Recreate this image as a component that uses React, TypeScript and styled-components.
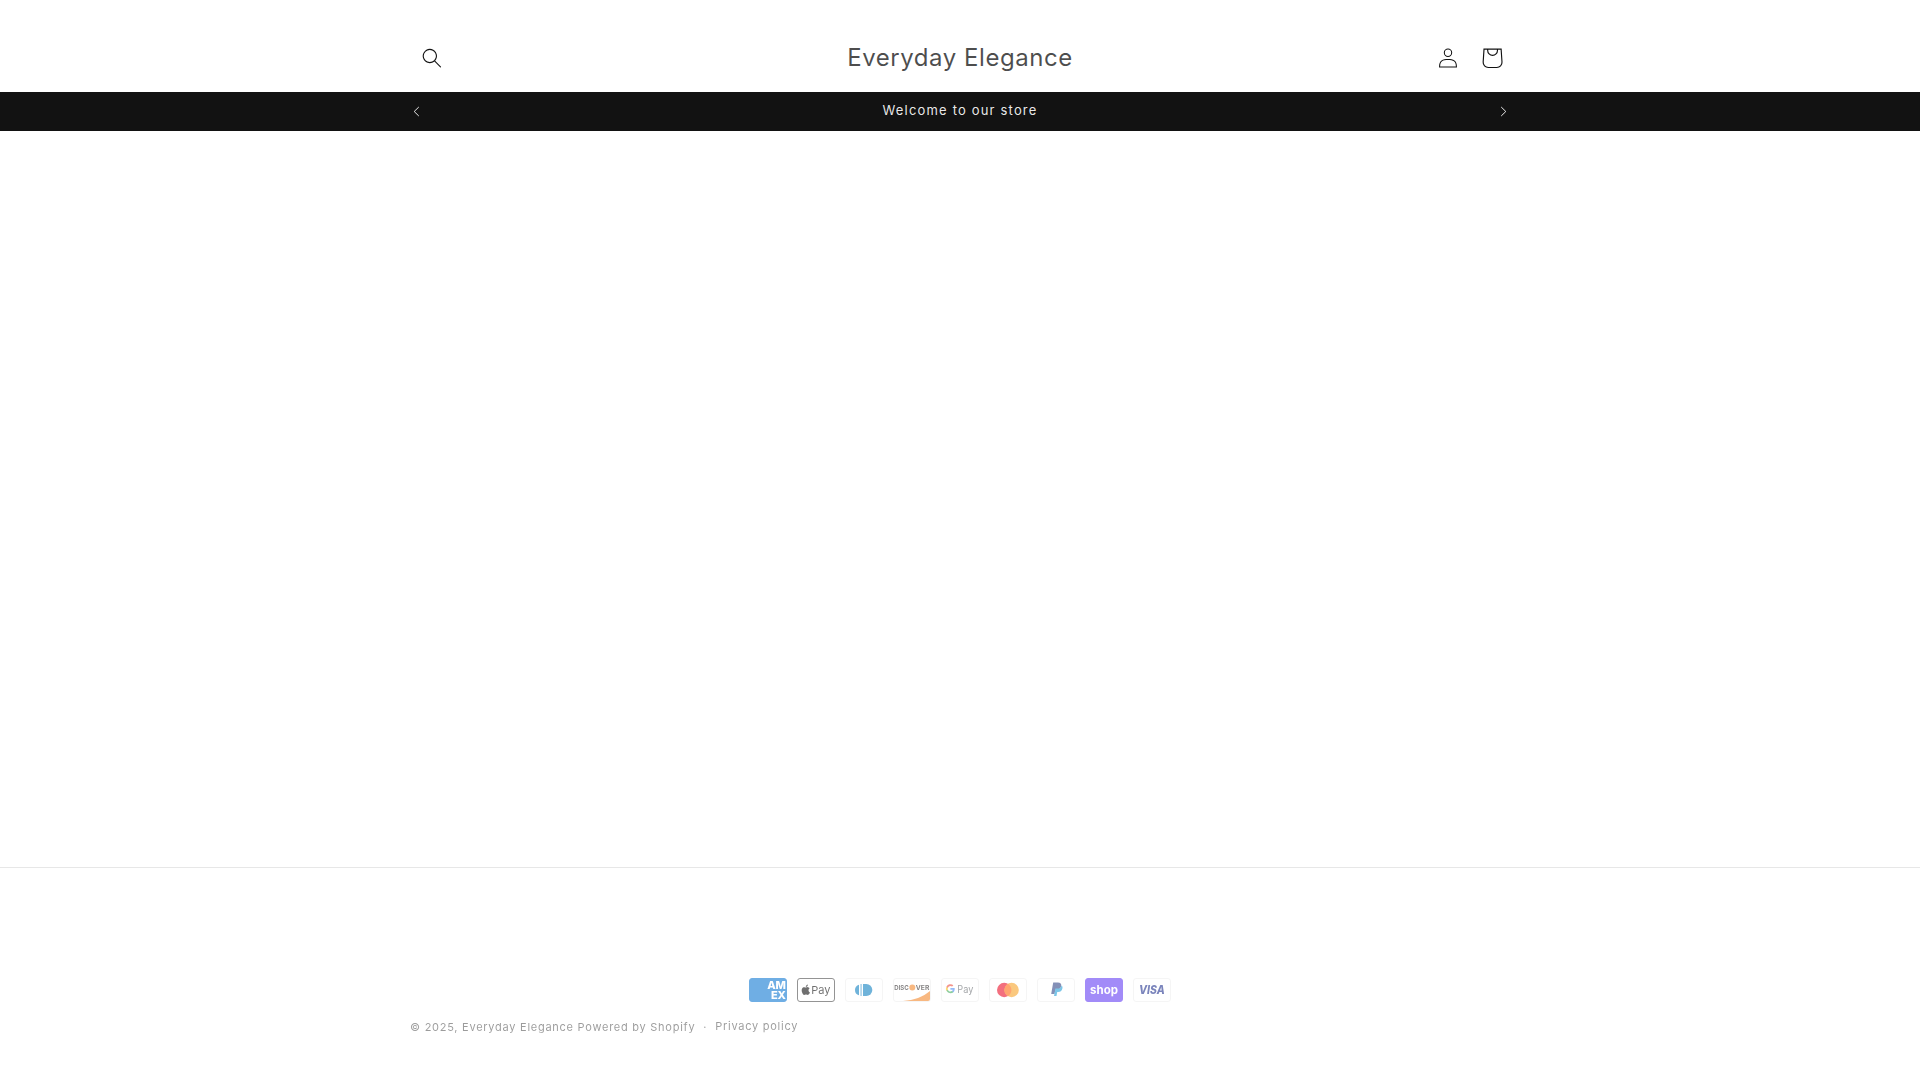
import React from "react";
import styled, { createGlobalStyle } from "styled-components";

const Global = createGlobalStyle`
  html, body { margin: 0; padding: 0; background: #fff; }
  body { font-family: Inter, "Liberation Sans", sans-serif; color: #121212; }
`;

const Page = styled.div`
  display: flex;
  flex-direction: column;
  height: 1080px;
  overflow: hidden;
`;

const Header = styled.header`
  display: grid;
  grid-template-columns: 1fr auto 1fr;
  align-items: center;
  box-sizing: border-box;
  width: 1200px;
  height: 92px;
  margin: 0 auto;
  padding: 24px 50px 0;
`;

const IconButton = styled.button`
  display: flex;
  align-items: center;
  justify-content: center;
  width: 44px;
  height: 44px;
  padding: 0;
  border: 0;
  background: none;
  color: #121212;
  svg { display: block; flex: none; }
`;

const Icons = styled.div`
  display: flex;
  justify-content: flex-end;
  margin-right: -4px;
`;

const Title = styled.h1`
  margin: 0;
  font-size: 24px;
  font-weight: 400;
  letter-spacing: 0.55px;
  line-height: 1.3;
  color: rgba(18, 18, 18, 0.75);
`;

const Announcement = styled.div`
  height: 39px;
  background: #121212;
  color: #fff;
`;

const AnnouncementInner = styled.div`
  display: flex;
  align-items: center;
  justify-content: space-between;
  box-sizing: border-box;
  width: 1200px;
  height: 100%;
  margin: 0 auto;
  padding: 0 50px;
`;

const Arrow = styled.button`
  display: flex;
  align-items: center;
  justify-content: center;
  width: 12px;
  height: 39px;
  padding: 0;
  border: 0;
  background: none;
  color: #fff;
`;

const AnnouncementText = styled.p`
  margin: 0 0 2px;
  font-size: 13px;
  letter-spacing: 1.18px;
  line-height: 1.2;
  color: rgba(255, 255, 255, 0.92);
`;

const Main = styled.main`
  flex: 1;
`;

const Footer = styled.footer`
  box-sizing: border-box;
  height: 213px;
  border-top: 1px solid rgba(18, 18, 18, 0.1);
`;

const FooterInner = styled.div`
  box-sizing: border-box;
  width: 1200px;
  margin: 0 auto;
  padding: 110px 50px 0;
  opacity: 0.56;
  filter: blur(0.6px);
`;

const Payments = styled.ul`
  display: flex;
  justify-content: center;
  gap: 10px;
  margin: 0;
  padding: 0;
  list-style: none;
  li { height: 24px; }
  svg { display: block; }
`;

const Legal = styled.div`
  display: flex;
  align-items: center;
  margin-top: 16px;
  font-size: 11px;
  line-height: 18px;
  letter-spacing: 0.74px;
  color: rgba(18, 18, 18, 0.75);
`;

const Copyright = styled.small`
  font-size: 11px;
`;

const Dot = styled.span`
  margin: 0 8px;
`;

const Policy = styled.span`
  margin-top: -2px;
`;

const SearchIcon = () => (
  <svg width="20" height="20" viewBox="0 0 18 19" fill="currentColor">
    <path fillRule="evenodd" clipRule="evenodd" d="M11.03 11.68A5.784 5.784 0 112.85 3.5a5.784 5.784 0 018.18 8.18zm.26 1.12a6.78 6.78 0 11.72-.7l5.4 5.4a.5.5 0 11-.71.7l-5.41-5.4z" />
  </svg>
);
const AccountIcon = () => (
  <svg width="20" height="20" viewBox="0 0 18 19" fill="currentColor">
    <path fillRule="evenodd" clipRule="evenodd" d="M6 4.5a3 3 0 116 0 3 3 0 01-6 0zm3-4a4 4 0 100 8 4 4 0 000-8zm5.58 12.15c1.12.82 1.83 2.24 1.91 4.85H1.51c.08-2.6.79-4.03 1.9-4.85C4.66 11.75 6.5 11.5 9 11.5s4.35.26 5.58 1.15zM9 10.5c-2.5 0-4.65.24-6.17 1.35C1.27 12.98.5 14.93.5 18v.5h17V18c0-3.07-.77-5.02-2.33-6.15-1.52-1.1-3.67-1.35-6.17-1.35z" />
  </svg>
);
const CartIcon = () => (
  <svg width="46" height="46" viewBox="0 0 40 40" fill="currentColor">
    <path fillRule="evenodd" d="M15.75 11.8h-3.16l-.77 11.6a5 5 0 0 0 4.99 5.34h7.38a5 5 0 0 0 4.99-5.33L28.4 11.8zm0 1h-2.22l-.71 10.67a4 4 0 0 0 3.99 4.27h7.38a4 4 0 0 0 4-4.27l-.72-10.67h-2.22v.63a4.75 4.75 0 1 1-9.5 0zm8.5 0h-7.5v.63a3.75 3.75 0 1 0 7.5 0z" />
  </svg>
);
const Chevron = ({ dir }: { dir: "left" | "right" }) => (
  <svg width="7" height="11" viewBox="0 0 7 11" fill="none" stroke="currentColor" strokeWidth="0.9">
    <path d={dir === "left" ? "M5.8 1 1.2 5.5 5.8 10" : "M1.2 1 5.8 5.5 1.2 10"} />
  </svg>
);

const Card = ({ children, fill = "#fff", stroke = "#000", strokeOpacity = 0.07 }: { children: React.ReactNode; fill?: string; stroke?: string; strokeOpacity?: number }) => (
  <svg width="38" height="24" viewBox="0 0 38 24">
    <rect x="0.5" y="0.5" width="37" height="23" rx="2.5" fill={fill} stroke={stroke} strokeOpacity={strokeOpacity} />
    {children}
  </svg>
);

const logoFont = "Inter, 'Liberation Sans', sans-serif";

const payments = [
  <Card fill="#006fcf" stroke="#006fcf" strokeOpacity={1}>
    <text x="37" y="11" textAnchor="end" fontFamily={logoFont} fontSize="11" fontWeight="800" fill="#fff">AM</text>
    <text x="37" y="20.5" textAnchor="end" fontFamily={logoFont} fontSize="11" fontWeight="800" fill="#fff">EX</text>
  </Card>,
  <Card stroke="#000" strokeOpacity={0.75}>
    <path d="M10.3 8.2c-.4.5-.9.8-1.5.8-.1-.6.2-1.2.5-1.6.4-.4 1-.8 1.5-.8.1.6-.1 1.2-.5 1.6zm.5.9c-.8 0-1.5.5-1.9.5s-1-.5-1.7-.4c-.9 0-1.7.5-2.1 1.3-.9 1.6-.2 3.9.6 5.2.4.6.9 1.3 1.6 1.3.6 0 .9-.4 1.7-.4s1 .4 1.7.4 1.1-.6 1.5-1.2c.5-.7.7-1.4.7-1.4s-1.4-.5-1.4-2.1c0-1.3 1.1-2 1.1-2-.6-.9-1.5-1-1.8-1.1z" fill="#000" />
    <text x="14.2" y="16.2" fontFamily={logoFont} fontSize="11" fontWeight="400" fill="#000">Pay</text>
  </Card>,
  <Card>
    <path d="M14 6.700a5.500 5.500 0 0 0 0 10.600z" fill="#0079be" />
    <rect x="15.600" y="6" width="0.900" height="12" fill="#0079be" />
    <path d="M18 6h3.300a6 6 0 0 1 0 12H18z" fill="#0079be" />
  </Card>,
  <Card>
    <path d="M37 13V21a2 2 0 0 1-2 2H10c11-.8 20-4 27-10z" fill="#f38120" />
    <text x="1.300" y="11.800" fontFamily={logoFont} fontSize="6.800" fontWeight="700" fill="#231f20" textLength="14.500" lengthAdjust="spacingAndGlyphs">DISC</text>
    <circle cx="19.300" cy="9.400" r="3" fill="#f38120" />
    <text x="22.800" y="11.800" fontFamily={logoFont} fontSize="6.800" fontWeight="700" fill="#231f20" textLength="13.500" lengthAdjust="spacingAndGlyphs">VER</text>
  </Card>,
  <Card>
    <path d="M13.700 10.900a4.500 4.500 0 0 0-.08-.900H9.400v1.700h2.420c-.1.560-.420 1.040-.890 1.350v1.130h1.440c.840-.770 1.330-1.920 1.330-3.280z" fill="#4285f4" />
    <path d="M9.400 15.300c1.200 0 2.210-.400 2.950-1.080l-1.440-1.130c-.400.270-.910.430-1.510.430-1.160 0-2.140-.780-2.490-1.840H5.430v1.160a4.450 4.450 0 0 0 3.970 2.460z" fill="#34a853" />
    <path d="M6.910 11.680a2.670 2.670 0 0 1 0-1.700V8.820H5.430a4.450 4.450 0 0 0 0 4.020z" fill="#fbbc04" />
    <path d="M9.400 7.940c.650 0 1.240.220 1.700.670l1.270-1.270A4.450 4.450 0 0 0 5.430 8.820l1.480 1.160c.350-1.060 1.330-2.040 2.490-2.040z" fill="#ea4335" />
    <text x="16.300" y="15.200" fontFamily={logoFont} fontSize="10" fontWeight="400" fill="#5f6368" textLength="16" lengthAdjust="spacingAndGlyphs">Pay</text>
  </Card>,
  <Card>
    <circle cx="15.200" cy="12" r="7.200" fill="#eb001b" />
    <circle cx="22.600" cy="12" r="7.200" fill="#f79e1b" />
    <path d="M18.900 5.800a7.200 7.200 0 0 1 0 12.400 7.200 7.200 0 0 1 0-12.400z" fill="#ff5f00" />
  </Card>,
  <Card>
    <path d="M16.200 4.500h4.700c2.600 0 3.700 1.500 3.300 3.500-.5 2.500-2.100 3.800-4.400 3.800h-1.500l-.7 4.200h-3.400z" fill="#253b80" />
    <path d="M24.500 7.400c.9.600 1.200 1.600.9 3-.5 2.400-2.100 3.500-4.300 3.500h-.9l-.7 4H17l.5-2.400.9-4.900h2c2.300 0 3.700-1.100 4.100-3.200z" fill="#179bd7" />
  </Card>,
  <Card fill="#5a31f4" stroke="#5a31f4" strokeOpacity={1}>
    <text x="19" y="15.800" textAnchor="middle" fontFamily={logoFont} fontSize="11.500" fontWeight="700" fill="#fff">shop</text>
  </Card>,
  <Card>
    <text x="6" y="16" fontFamily={logoFont} fontSize="12" fontWeight="800" fontStyle="italic" fill="#142688" textLength="25.700" lengthAdjust="spacingAndGlyphs">VISA</text>
  </Card>,
];

export default function App() {
  return (
    <>
      <Global />
      <Page>
        <Header>
          <div>
            <IconButton aria-label="Search"><SearchIcon /></IconButton>
          </div>
          <Title>Everyday Elegance</Title>
          <Icons>
            <IconButton aria-label="Log in"><AccountIcon /></IconButton>
            <IconButton aria-label="Cart"><CartIcon /></IconButton>
          </Icons>
        </Header>
        <Announcement>
          <AnnouncementInner>
            <Arrow aria-label="Previous"><Chevron dir="left" /></Arrow>
            <AnnouncementText>Welcome to our store</AnnouncementText>
            <Arrow aria-label="Next"><Chevron dir="right" /></Arrow>
          </AnnouncementInner>
        </Announcement>
        <Main />
        <Footer>
          <FooterInner>
            <Payments>
              {payments.map((p, i) => <li key={i}>{p}</li>)}
            </Payments>
            <Legal>
              <Copyright>© 2025, Everyday Elegance Powered by Shopify</Copyright>
              <Dot>·</Dot>
              <Policy>Privacy policy</Policy>
            </Legal>
          </FooterInner>
        </Footer>
      </Page>
    </>
  );
}
